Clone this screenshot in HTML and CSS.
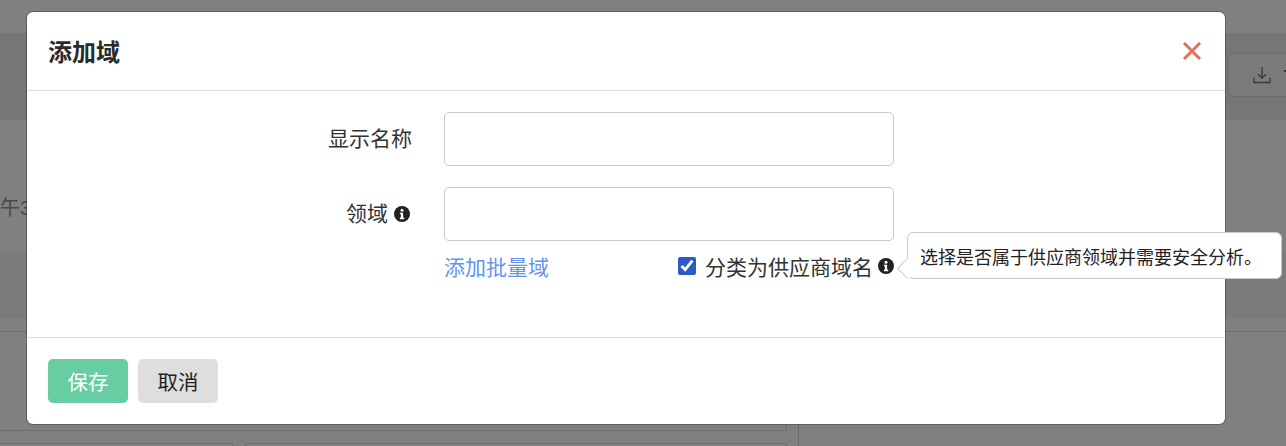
FILE: index.html
```html
<!DOCTYPE html>
<html lang="zh-CN">
<head>
    <meta charset="UTF-8">
    <title>添加域</title>
    <link rel="stylesheet" href="styles.css">
</head>
<body>
    <div class="page">
        <div class="page-top"></div>
        <div class="toolbar">
            <div class="toolbar-btn">
                <svg class="download-icon" width="18" height="18" viewBox="0 0 18 18" fill="none" stroke="#3a3a3a" stroke-width="1.3">
                    <path d="M9 1V12M5 8.2 9 12l4-3.8M1 11.5V16.5H17V11.5"/>
                </svg>
                <span class="caret"></span>
            </div>
        </div>
        <div class="page-date">午3</div>
        <div class="page-tint"></div>
        <div class="page-gap"></div>
        <div class="page-table">
            <div class="table-main">
                <div class="table-panel"></div>
                <div class="table-cells">
                    <div class="table-cell cell-small"></div>
                    <div class="table-cell cell-large"></div>
                </div>
            </div>
        </div>
    </div>

    <div class="modal">
        <div class="modal-header">
            <h2>添加域</h2>
            <svg class="close-icon" width="18" height="18" viewBox="0 0 18 18" stroke="#e0715c" stroke-width="3">
                <path d="M1 1 17 17M17 1 1 17"/>
            </svg>
        </div>
        <div class="modal-body">
            <div class="form-row">
                <label class="form-label">显示名称</label>
                <input class="form-input" type="text">
            </div>
            <div class="form-row">
                <label class="form-label">领域 <svg class="info-icon" viewBox="0 0 16 16"><circle cx="8" cy="8" r="8" fill="#222"/><circle cx="8" cy="4.2" r="1.5" fill="#fff"/><path d="M5.9 6.7h3.2v4.9h1.1v1.6H5.9v-1.6h1v-3.3h-1z" fill="#fff"/></svg></label>
                <input class="form-input" type="text">
            </div>
            <div class="form-extra">
                <a class="bulk-link">添加批量域</a>
                <div class="vendor-check">
                    <input type="checkbox" checked>
                    <span>分类为供应商域名</span>
                    <svg class="info-icon" viewBox="0 0 16 16"><circle cx="8" cy="8" r="8" fill="#222"/><circle cx="8" cy="4.2" r="1.5" fill="#fff"/><path d="M5.9 6.7h3.2v4.9h1.1v1.6H5.9v-1.6h1v-3.3h-1z" fill="#fff"/></svg>
                    <div class="tooltip">选择是否属于供应商领域并需要安全分析。</div>
                </div>
            </div>
        </div>
        <div class="modal-footer">
            <button class="btn btn-save">保存</button>
            <button class="btn btn-cancel">取消</button>
        </div>
    </div>
</body>
</html>
```
FILE: styles.css
```css
html, body {
    margin: 0;
    height: 446px;
    overflow: hidden;
}
body {
    font-family: "Liberation Sans", "Noto Sans CJK SC", sans-serif;
    background: #808080;
    color: #222;
}
.page-top {
    height: 33px;
}
.toolbar {
    height: 87px;
    background: #767676;
    display: flex;
    justify-content: flex-end;
    align-items: center;
    overflow: hidden;
}
.toolbar-btn {
    width: 100px;
    height: 44px;
    margin: 0 -42px 3px 0;
    box-sizing: border-box;
    border: 1px solid #6e6e6e;
    border-radius: 6px;
    background: #7b7b7b;
    display: flex;
    align-items: center;
    padding-left: 24px;
    gap: 13px;
}
.download-icon {
    flex: none;
}
.caret {
    width: 6px;
    height: 2px;
    background: #3a3a3a;
    margin-bottom: 9px;
}
.page-date {
    height: 132px;
    box-sizing: border-box;
    padding-top: 75px;
    font-size: 20px;
    line-height: 26px;
    color: #4a4a4a;
}
.page-tint {
    height: 66px;
    background: #7b7b7b;
}
.page-gap {
    height: 13px;
}
.page-table {
    border-top: 1px solid #6e6e6e;
    height: 114px;
}
.table-main {
    width: 799px;
    height: 114px;
    box-sizing: border-box;
    border-right: 1px solid #6e6e6e;
}
.table-panel {
    width: 787px;
    height: 99px;
    box-sizing: border-box;
    border-right: 1px solid #6e6e6e;
    border-bottom: 1px solid #6e6e6e;
}
.table-cells {
    display: flex;
    gap: 12px;
    margin-top: 12px;
    width: 787px;
}
.table-cell {
    height: 4px;
    border-top: 1px solid #6e6e6e;
    border-right: 1px solid #6e6e6e;
    box-sizing: border-box;
}
.cell-small {
    width: 233px;
}
.cell-large {
    flex: 1;
    border-left: 1px solid #6e6e6e;
}

.modal {
    position: absolute;
    left: 27px;
    top: 12px;
    width: 1198px;
    height: 412px;
    background: #fff;
    border-radius: 6px;
    box-shadow: 0 0 0 1px rgba(0,0,0,0.25);
    display: flex;
    flex-direction: column;
}
.modal-header {
    height: 78px;
    border-bottom: 1px solid #dedede;
    display: flex;
    justify-content: space-between;
    align-items: center;
    padding: 0 24px 0 21px;
}
.modal-header h2 {
    margin: 0 0 2px;
    font-size: 24px;
    font-weight: 700;
    color: #2b2b2b;
}
.close-icon {
    margin-bottom: 1px;
}
.modal-body {
    flex: 1;
    padding-top: 21px;
}
.form-row {
    display: flex;
    align-items: center;
    margin-bottom: 21px;
}
.form-label {
    width: 385px;
    box-sizing: border-box;
    padding-bottom: 4px;
    font-size: 21px;
    color: #333;
    display: flex;
    justify-content: flex-end;
    align-items: center;
    gap: 6px;
    margin-right: 32px;
}
.form-label .info-icon {
    margin: 4px 2px 0 0;
}
.form-input {
    width: 450px;
    height: 54px;
    box-sizing: border-box;
    border: 1px solid #c8c8c8;
    border-radius: 5px;
    padding: 0 12px;
    margin: 0;
}
.info-icon {
    width: 16px;
    height: 16px;
    flex: none;
}
.form-extra {
    display: flex;
    margin-left: 417px;
    width: 450px;
    justify-content: space-between;
    align-items: center;
    margin-top: -11px;
    height: 30px;
}
.bulk-link {
    font-size: 21px;
    color: #6494ee;
}
.vendor-check {
    position: relative;
    display: flex;
    align-items: center;
    font-size: 21px;
    color: #333;
}
.vendor-check input {
    width: 18px;
    height: 18px;
    margin: 0 9px 0 0;
    accent-color: #2a5cc4;
}
.vendor-check .info-icon {
    margin-left: 5px;
}
.tooltip {
    position: absolute;
    left: 229px;
    top: 50%;
    margin-top: -34px;
    width: 375px;
    height: 47px;
    box-sizing: border-box;
    padding-left: 12px;
    background: #fff;
    border: 1px solid #c8c8c8;
    border-radius: 6px;
    font-size: 18px;
    color: #222;
    display: flex;
    align-items: center;
    white-space: nowrap;
}
.tooltip::before {
    content: "";
    position: absolute;
    left: -8px;
    top: 28px;
    width: 14px;
    height: 14px;
    background: #fff;
    border-left: 1px solid #c8c8c8;
    border-bottom: 1px solid #c8c8c8;
    transform: rotate(45deg);
}
.modal-footer {
    height: 86px;
    border-top: 1px solid #dedede;
    display: flex;
    align-items: center;
    padding-left: 21px;
    gap: 10px;
}
.btn {
    width: 80px;
    height: 44px;
    border: none;
    border-radius: 5px;
    font-family: inherit;
    font-size: 20.5px;
}
.btn-save {
    background: #68cda3;
    color: #fff;
}
.btn-cancel {
    background: #dedede;
    color: #222;
}
```
